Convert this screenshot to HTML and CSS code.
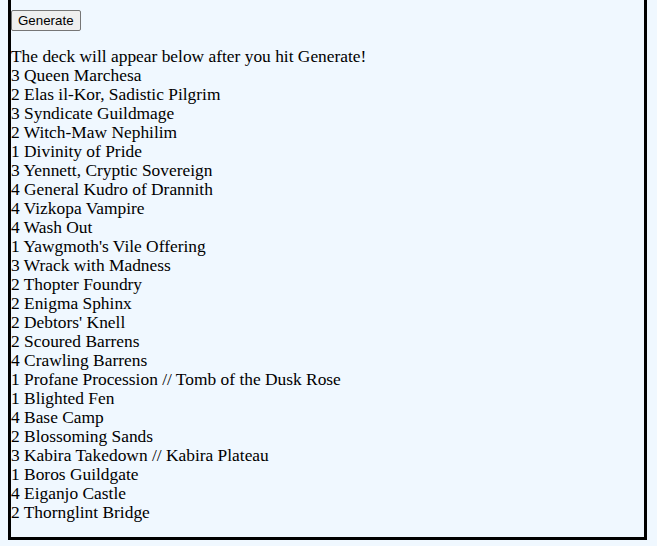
FILE: index.html
```html
<!DOCTYPE html>
<html lang="en">
	<head>
		<meta charset="UTF-8" />
		<meta name="viewport" content="width=device-width, initial-scale=1.0" />
		<title>Deck Generator</title>
		<link rel="stylesheet" href="styles.css">
	</head>

	<body>
		<div class="container">
			<button class="btn" id="generate">Generate</button>
			<div class="deck" id="deck">
				<div class="line">The deck will appear below after you hit Generate!</div>
				<div class="line">3 Queen Marchesa</div>
				<div class="line">2 Elas il-Kor, Sadistic Pilgrim</div>
				<div class="line">3 Syndicate Guildmage</div>
				<div class="line">2 Witch-Maw Nephilim</div>
				<div class="line">1 Divinity of Pride</div>
				<div class="line">3 Yennett, Cryptic Sovereign</div>
				<div class="line">4 General Kudro of Drannith</div>
				<div class="line">4 Vizkopa Vampire</div>
				<div class="line">4 Wash Out</div>
				<div class="line">1 Yawgmoth's Vile Offering</div>
				<div class="line">3 Wrack with Madness</div>
				<div class="line">2 Thopter Foundry</div>
				<div class="line">2 Enigma Sphinx</div>
				<div class="line">2 Debtors' Knell</div>
				<div class="line">2 Scoured Barrens</div>
				<div class="line">4 Crawling Barrens</div>
				<div class="line">1 Profane Procession // Tomb of the Dusk Rose</div>
				<div class="line">1 Blighted Fen</div>
				<div class="line">4 Base Camp</div>
				<div class="line">2 Blossoming Sands</div>
				<div class="line">3 Kabira Takedown // Kabira Plateau</div>
				<div class="line">1 Boros Guildgate</div>
				<div class="line">4 Eiganjo Castle</div>
				<div class="line">2 Thornglint Bridge</div>
			</div>
		</div>
	</body>
</html>
```

FILE: styles.css
```css
html,
body {
	background: #f0f8ff;
}

body {
	margin: 0 8px;
}

.container {
	box-sizing: border-box;
	width: 639px;
	border: 3px solid #000;
	border-top: none;
	padding: 10px 0 15px;
	font-family: "Liberation Serif", serif;
	font-size: 17.4px;
	line-height: 19px;
	color: #000;
}

.btn {
	display: block;
	height: 21px;
	padding: 0 6px;
	font-family: "Liberation Sans", Arial, sans-serif;
	font-size: 13.33px;
	background: #efefef;
	border: 1px solid #767676;
	border-radius: 2px;
	color: #000;
}

.deck {
	margin-top: 16px;
}
```
